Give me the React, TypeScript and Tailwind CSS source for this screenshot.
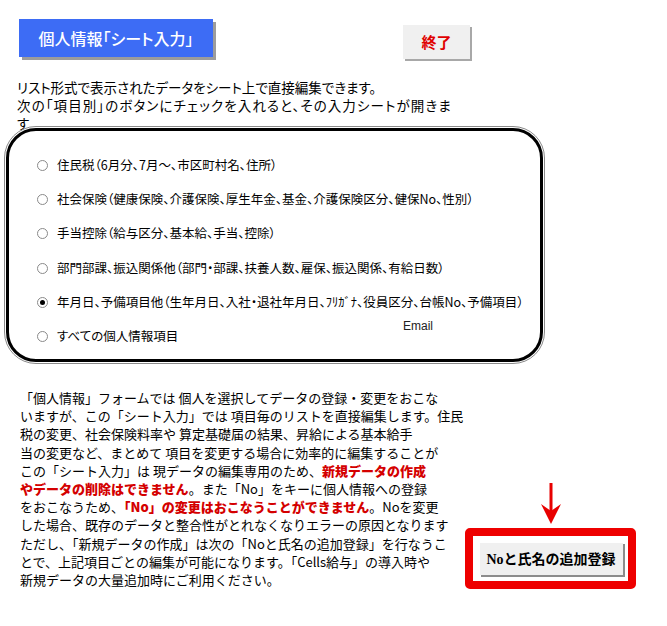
import React from "react";

const Radio = ({ checked }: { checked?: boolean }) => (
  <span className="w-[11px] h-[11px] rounded-full border border-[#8a8a8a] bg-white flex items-center justify-center shrink-0">
    {checked && <span className="w-[5px] h-[5px] rounded-full bg-black" />}
  </span>
);

const rows = [
  { t: "住民税（6月分、7月～、市区町村名、住所）" },
  { t: "社会保険（健康保険、介護保険、厚生年金、基金、介護保険区分、健保No、性別）" },
  { t: "手当控除（給与区分、基本給、手当、控除）" },
  { t: "部門部課、振込関係他（部門・部課、扶養人数、雇保、振込関係、有給日数）" },
  { t: "年月日、予備項目他（生年月日、入社・退社年月日、ﾌﾘｶﾞﾅ、役員区分、台帳No、予備項目）", checked: true },
  { t: "すべての個人情報項目" },
];

const R = ({ children }: { children: React.ReactNode }) => (
  <span className="text-[#d40000] font-black">{children}</span>
);

export default function App() {
  return (
    <div className="w-[667px] h-[626px] bg-white overflow-hidden text-black font-['Noto_Sans_CJK_JP',sans-serif]">
      {/* header buttons */}
      <div className="flex items-start pt-[19px] pl-[19px]">
        <div className="w-[194px] h-[38px] bg-[#3d6cf5] shadow-[3px_3px_0_#9c9c9c] flex items-center justify-center text-white text-[16px] font-medium [font-feature-settings:'palt']">
          個人情報「シート入力」
        </div>
        <div className="ml-[190px] mt-[6px] w-[67px] h-[34px] bg-[#f0f0f0] shadow-[2px_2px_0_#a8a8a8] flex items-center justify-center text-[#e00000] font-bold text-[15px]">
          終了
        </div>
      </div>

      {/* intro */}
      <div className="mt-[19px] pl-[17px] text-[13.5px] leading-[18px] [font-feature-settings:'palt'] whitespace-nowrap">
        <div>リスト形式で表示されたデータをシート上で直接編集できます。</div>
        <div className="tracking-[1.1px]">次の「項目別」のボタンにチェックを入れると、その入力シートが開きま</div>
        <div>す</div>
      </div>

      {/* options box */}
      <div className="relative -mt-[4px] ml-[6px] w-[537px] h-[234px] rounded-[30px] border-[3px] border-black outline outline-1 outline-[#8a8a8a] outline-offset-[1px] bg-white pt-[17px] pl-[28px]">
        {rows.map((r, i) => (
          <div key={i} className="h-[34.3px] flex items-center gap-[9px] text-[12.5px] whitespace-nowrap [font-feature-settings:'palt']">
            <Radio checked={r.checked} />
            <span>{r.t}</span>
          </div>
        ))}
        <span className="absolute left-[394px] top-[186px] text-[12px] font-['Liberation_Sans',sans-serif] text-[#222]">
          Email
        </span>
      </div>

      {/* bottom */}
      <div className="flex items-end mt-[27px]">
        <div className="pl-[20px] text-[13px] leading-[18.2px] whitespace-nowrap">
          <div>「個人情報」フォームでは 個人を選択してデータの登録・変更をおこな</div>
          <div>いますが、この「シート入力」では 項目毎のリストを直接編集します。住民</div>
          <div>税の変更、社会保険料率や 算定基礎届の結果、昇給による基本給手</div>
          <div>当の変更など、まとめて 項目を変更する場合に効率的に編集することが</div>
          <div>この「シート入力」は 現データの編集専用のため、<R>新規データの作成</R></div>
          <div><R>やデータの削除はできません</R>。また「No」をキーに個人情報への登録</div>
          <div>をおこなうため、<R>「No」の変更はおこなうことができません</R>。Noを変更</div>
          <div>した場合、既存のデータと整合性がとれなくなりエラーの原因となります</div>
          <div>ただし、「新規データの作成」は次の「Noと氏名の追加登録」を行なうこ</div>
          <div>とで、上記項目ごとの編集が可能になります。「Cells給与」の導入時や</div>
          <div>新規データの大量追加時にご利用ください。</div>
        </div>
        <div className="ml-auto mr-[31px] flex flex-col items-center">
          <svg width="22" height="42" viewBox="0 0 22 42" className="mb-[3px]">
            <rect x="9.5" y="0" width="3" height="30" fill="#e80000" />
            <polygon points="1,21 11,28 21,21 11,41" fill="#e80000" />
          </svg>
          <div className="w-[171px] h-[61px] border-[8px] border-[#ee0000] rounded-[5px] bg-white flex items-center justify-center">
            <div className="w-[144px] h-[33px] bg-[#f0f0f0] shadow-[2px_2px_0_#8c8c8c] border-t border-l border-white flex items-center justify-center font-bold text-[14px] font-['Liberation_Serif','Noto_Sans_CJK_JP',serif]">
              Noと氏名の追加登録
            </div>
          </div>
        </div>
      </div>
    </div>
  );
}
